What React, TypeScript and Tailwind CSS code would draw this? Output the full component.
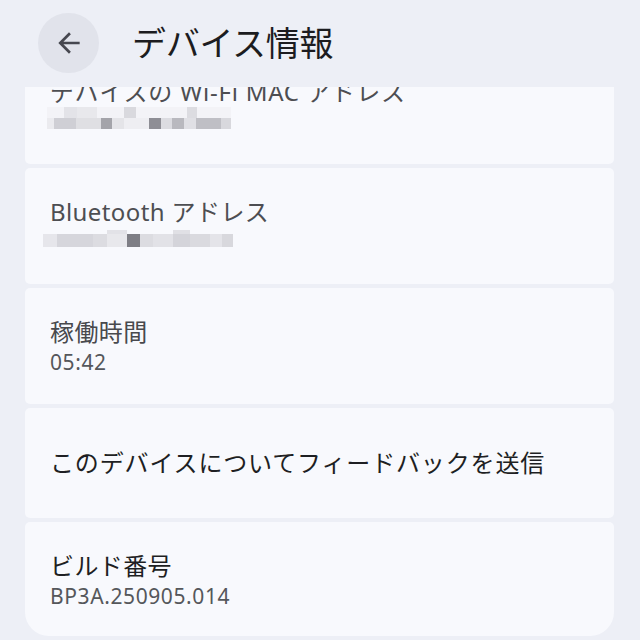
import React from "react";

type Cell = { w: number; c: string; top?: string };

const wifiTop: Cell[] = [
  { w: 17, c: "#f3f3f7" },
  { w: 13, c: "#e3e3e8" },
  { w: 20, c: "#e8e8ec" },
  { w: 27, c: "#f3f3f7" },
  { w: 12, c: "#d9d9de" },
  { w: 51, c: "#f3f3f7" },
  { w: 10, c: "#dcdce1" },
  { w: 34, c: "#f3f3f7" },
];
const wifiBottom: Cell[] = [
  { w: 7, c: "#ebebef" },
  { w: 22, c: "#cfcfd5" },
  { w: 25, c: "#dfdfe3" },
  { w: 11, c: "#a4a4aa" },
  { w: 12, c: "#e4e4e8" },
  { w: 25, c: "#eeeef2" },
  { w: 12, c: "#8e8e95" },
  { w: 11, c: "#dcdce1" },
  { w: 12, c: "#b9b9bf" },
  { w: 12, c: "#e0e0e5" },
  { w: 25, c: "#bfbfc5" },
  { w: 10, c: "#d8d8dd" },
];
const btRow: Cell[] = [
  { w: 14, c: "#e6e6eb" },
  { w: 36, c: "#d6d6dc" },
  { w: 14, c: "#dcdce1" },
  { w: 20, c: "#e8e8ec", top: "#e2e2e7" },
  { w: 13, c: "#7e7e85" },
  { w: 13, c: "#dcdce1" },
  { w: 20, c: "#e2e2e7" },
  { w: 17, c: "#d4d4da", top: "#e0e0e5" },
  { w: 20, c: "#dadadf" },
  { w: 12, c: "#e4e4e9" },
  { w: 11, c: "#d8d8dd" },
];

function Mosaic({ top, bottom, h }: { top?: Cell[]; bottom: Cell[]; h: number }) {
  return (
    <div className="flex flex-col">
      {top && (
        <div className="flex">
          {top.map((c, i) => (
            <div key={i} style={{ width: c.w, height: 11, background: c.c }} />
          ))}
        </div>
      )}
      <div className="flex">
        {bottom.map((c, i) => (
          <div key={i} style={{ width: c.w, height: h, background: c.c }} />
        ))}
      </div>
    </div>
  );
}

function BtMosaic() {
  return (
    <div className="flex flex-col">
      <div className="flex">
        {btRow.map((c, i) => (
          <div key={i} style={{ width: c.w, height: 4, background: c.top ?? "transparent" }} />
        ))}
      </div>
      <div className="flex">
        {btRow.map((c, i) => (
          <div key={i} style={{ width: c.w, height: 13, background: c.c }} />
        ))}
      </div>
    </div>
  );
}

const font = { fontFamily: "'Noto Sans', 'Noto Sans CJK JP', sans-serif" };

export default function App() {
  return (
    <div
      className="w-[640px] h-[640px] bg-[#edeff6] overflow-hidden flex flex-col"
      style={font}
    >
      <div className="h-[87px] shrink-0 flex items-start pl-[38px] pt-[13px]">
        <div className="w-[61px] h-[60px] rounded-full bg-[#e1e3eb] flex items-center justify-center">
          <svg width="32" height="32" viewBox="0 0 24 24" fill="#46474f">
            <path d="M20 11H7.83l5.59-5.59L12 4l-8 8 8 8 1.41-1.41L7.83 13H20v-2z" />
          </svg>
        </div>
        <div className="h-[60px] flex items-center ml-[33px] text-[34px] text-[#1c1c20] tracking-[-0.3px]">
          デバイス情報
        </div>
      </div>

      <div className="flex-1 overflow-hidden pl-[25px] pr-[26px]">
        <div className="flex flex-col gap-[4px] mt-[-39px]">
          <div className="h-[116px] bg-[#f8f9fd] rounded-t-[24px] rounded-b-[5px] pl-[25px] pt-[28px]">
            <div className="text-[24px] leading-[32px] text-[#4d4e52] tracking-[0.75px]">
              デバイスの Wi-Fi MAC アドレス
            </div>
            <div className="ml-[-3px] mt-[-1px]">
              <Mosaic top={wifiTop} bottom={wifiBottom} h={11} />
            </div>
          </div>

          <div className="h-[116px] bg-[#f8f9fd] rounded-[5px] pl-[25px] pt-[28px]">
            <div className="text-[24px] leading-[32px] text-[#4d4e52] tracking-[0.4px]">
              Bluetooth アドレス
            </div>
            <div className="ml-[-7px] mt-[2px]">
              <BtMosaic />
            </div>
          </div>

          <div className="h-[116px] bg-[#f8f9fd] rounded-[5px] pl-[25px] pt-[28px]">
            <div className="text-[24px] leading-[32px] text-[#48494d] tracking-[0.4px]">稼働時間</div>
            <div className="text-[21px] leading-[28px] text-[#55575b] tracking-[0.6px]">05:42</div>
          </div>

          <div className="h-[110px] bg-[#f8f9fd] rounded-[5px] pl-[25px] flex items-center">
            <div className="text-[24px] leading-[32px] text-[#1e1f23] tracking-[0.85px]">
              このデバイスについてフィードバックを送信
            </div>
          </div>

          <div className="h-[114px] bg-[#f8f9fd] rounded-t-[5px] rounded-b-[24px] pl-[25px] pt-[28px]">
            <div className="text-[24px] leading-[32px] text-[#1e1f23] tracking-[0.4px]">ビルド番号</div>
            <div className="text-[21px] leading-[28px] text-[#55575b] tracking-[0.6px]">
              BP3A.250905.014
            </div>
          </div>
        </div>
      </div>
    </div>
  );
}
